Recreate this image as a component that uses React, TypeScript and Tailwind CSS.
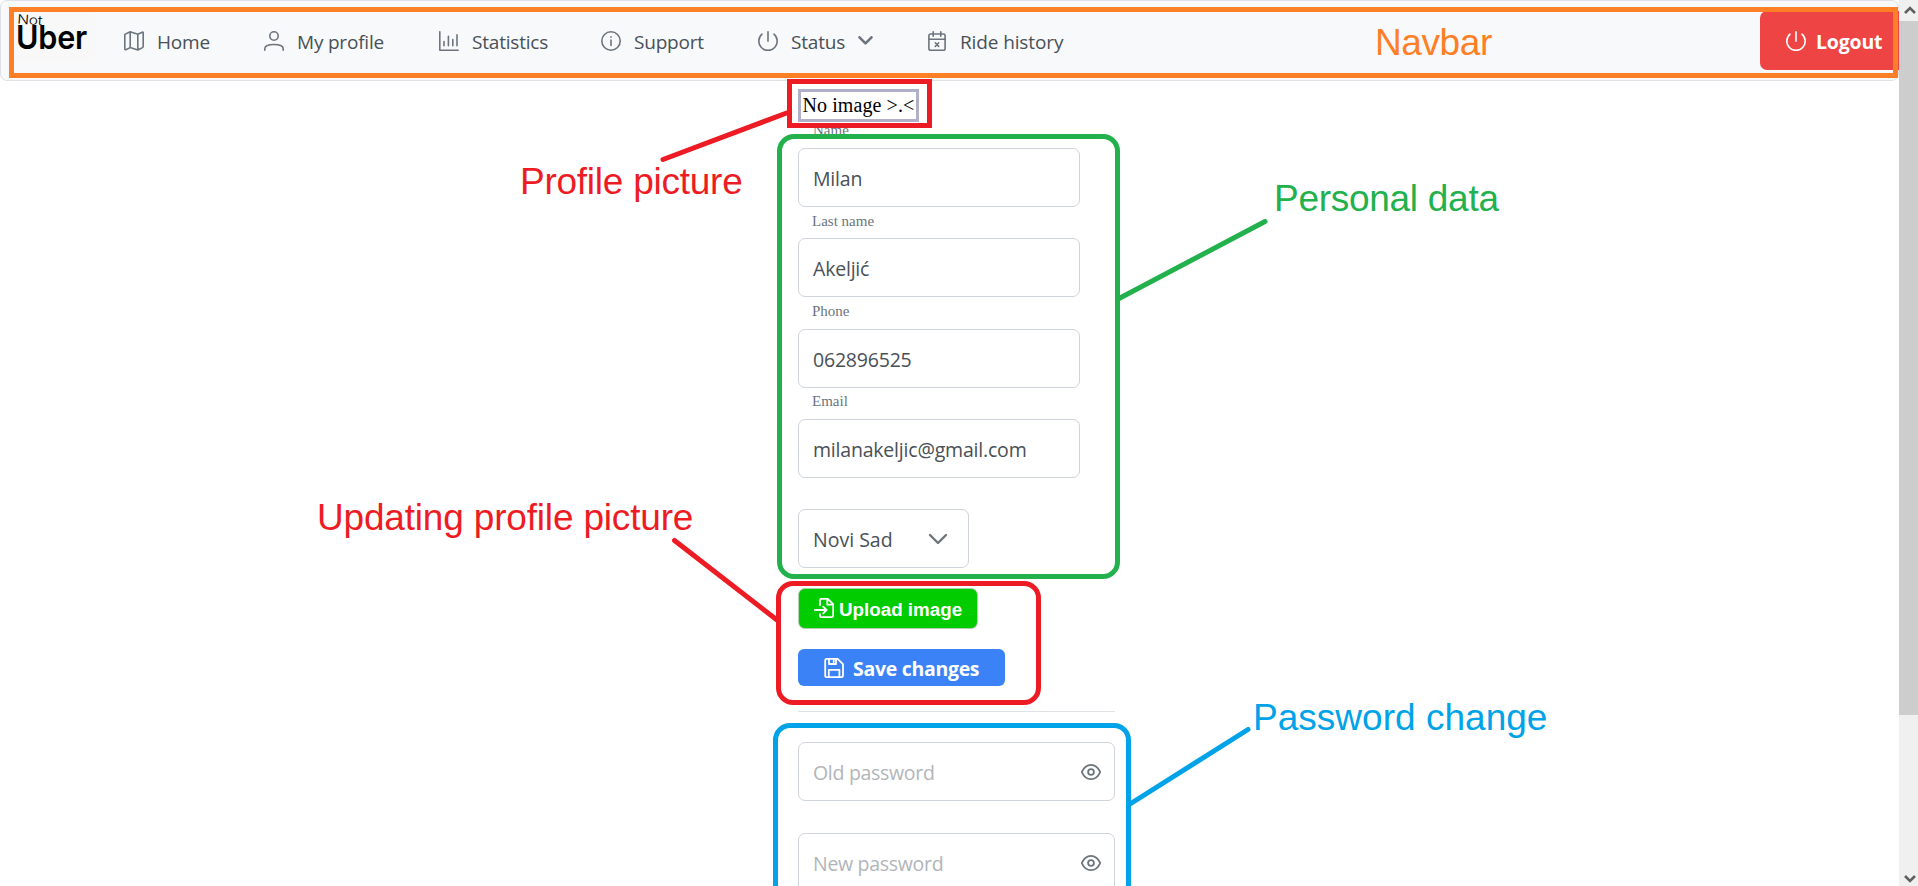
import type { ReactNode } from "react";

const SANS = "font-['Open_Sans','Noto_Sans',sans-serif]";

function Icon({ children, className = "", w = 1.6 }: { children: ReactNode; className?: string; w?: number }) {
  return (
    <svg viewBox="0 0 20 20" width="20" height="20" fill="none" stroke="currentColor" strokeWidth={w} strokeLinecap="round" strokeLinejoin="round" className={`shrink-0 ${className}`}>
      {children}
    </svg>
  );
}

const MapIcon = () => (
  <Icon>
    <path d="M.9 3.4 6.2.8l7.6 2.4 4.4-2q1-.3 1 .7v13.6q0 .8-.7 1.1l-4.7 2.4-7.6-2.4-4.4 2.1q-1 .3-1-.7V3.9ZM6.2.8v15.8M13.8 3.2V19" />
  </Icon>
);
const UserIcon = () => (
  <Icon>
    <circle cx="10" cy="5" r="4.2" />
    <path d="M.8 19.2v-1.4c0-2.6 3.6-4.3 9.2-4.3s9.2 1.7 9.2 4.3v1.4" />
  </Icon>
);
const ChartIcon = () => (
  <Icon>
    <path d="M.8.8v18.4h18.4M5 10.5v4.3M9.4 5.2v9.6M13.8 8.5v6.3M18 3.8v11" />
  </Icon>
);
const InfoIcon = () => (
  <Icon>
    <circle cx="10" cy="10" r="9.2" />
    <path d="M10 9v5.4M10 5.8v.5" />
  </Icon>
);
const PowerIcon = () => (
  <Icon>
    <path d="M10 .8v9.4M16 3.2a9.2 9.2 0 1 1-12 0" />
  </Icon>
);
const CalendarIcon = () => (
  <Icon>
    <rect x="1.9" y="3" width="16.2" height="16.2" rx="1.8" />
    <path d="M1.9 8.3h16.2M6.2.8v4.4M13.8.8v4.4M8.3 11.8l3.4 3.6M11.7 11.8l-3.4 3.6" />
  </Icon>
);
const EyeIcon = () => (
  <Icon w={1.8} className="text-[#6c757d]">
    <path d="M.8 10C2.6 6 6 2.9 10 2.9S17.400 6 19.200 10C17.400 14 14 17.100 10 17.100S2.600 14 .8 10Z" />
    <circle cx="10" cy="10" r="2.900" />
  </Icon>
);
const ImportIcon = () => (
  <Icon w={1.8}>
    <path d="M6 7V2.600Q6 .8 7.800.8h6l5.400 5.400v11.200q0 1.800-1.800 1.800H7.800Q6 19.200 6 17.400v-1.200M13.300 1v5.700h5.700M.8 12h11.600M9.200 8.600l3.400 3.400-3.400 3.400" />
  </Icon>
);
const SaveIcon = () => (
  <Icon w={1.8}>
    <path d="M3 .8h10.600l5.400 5.400v11.200q0 1.800-1.800 1.800H3Q1.200 19.200 1.200 17.400V2.600Q1.200.8 3 .8ZM5 1v5h7V1M4.800 19v-7.200h10.600V19M9.700 2.500v1.600" />
  </Icon>
);

function NavItem({ icon, label, className }: { icon: ReactNode; label: string; className: string }) {
  return (
    <li className={`flex items-center gap-[13px] text-[#6c757d] ${className}`}>
      {icon}
      <span className="pt-[2px] text-[#495057]">{label}</span>
      {label === "Status" && (
        <svg width="15" height="9" viewBox="0 0 15 9" fill="none" stroke="currentColor" strokeWidth="2.6" strokeLinecap="round" strokeLinejoin="round">
          <path d="m1.500 1.300 6 6 6-6" />
        </svg>
      )}
    </li>
  );
}

function Field({ label, value, labelClass }: { label: string; value: string; labelClass: string }) {
  return (
    <div>
      <div className={`text-[15px] font-['Liberation_Serif',serif] tracking-normal text-[#6c757d] ${labelClass}`}>{label}</div>
      <div className="flex h-[59px] w-[282px] items-center rounded-[7px] border border-[#ced4da] pt-[2px] pl-[14px] text-[#495057]">{value}</div>
    </div>
  );
}

function PasswordField({ placeholder, className }: { placeholder: string; className: string }) {
  return (
    <div className={`flex h-[59px] w-[317px] shrink-0 items-center justify-between rounded-[7px] border border-[#ced4da] pr-[13px] pl-[14px] ${className}`}>
      <span className="pt-[3px] tracking-[-0.3px] text-[#b1b5b9]">{placeholder}</span>
      <EyeIcon />
    </div>
  );
}

function Callout({ children, className }: { children: ReactNode; className: string }) {
  return <span className={`absolute text-[37px] leading-[40px] whitespace-nowrap font-['Liberation_Sans',Arial,sans-serif] ${className}`}>{children}</span>;
}

function Annotations() {
  return (
    <div className="pointer-events-none absolute inset-0 overflow-hidden">
      <div className="absolute top-[7px] left-[9px] h-[71px] w-[1889px] border-5 border-[#ff7f27]" />
      <div className="absolute top-[134px] left-[777px] h-[445px] w-[343px] rounded-[17px] border-5 border-[#22b14c]" />
      <div className="absolute top-[79px] left-[787px] h-[49px] w-[145px] border-5 border-[#ed1c24]" />
      <div className="absolute top-[581px] left-[776px] h-[124px] w-[265px] rounded-[17px] border-5 border-[#ed1c24]" />
      <div className="absolute top-[723px] left-[773px] h-[190px] w-[358px] rounded-[17px] border-5 border-[#00a2e8]" />
      <svg width="1918" height="886" className="absolute inset-0" strokeWidth="5" strokeLinecap="round">
        <path d="M663 159.500 788 112.500M674.500 540.500 777 620" stroke="#ed1c24" />
        <path d="M1119 298.500 1265 221.500" stroke="#22b14c" />
        <path d="M1130 804 1248 729.500" stroke="#00a2e8" />
      </svg>
      <Callout className="top-[23px] left-[1375px] tracking-[-0.4px] text-[#ff7f27]">Navbar</Callout>
      <Callout className="top-[162px] left-[520px] tracking-[-0.25px] text-[#ed1c24]">Profile picture</Callout>
      <Callout className="top-[179px] left-[1274px] tracking-[-0.28px] text-[#22b14c]">Personal data</Callout>
      <Callout className="top-[498px] left-[317px] tracking-[-0.18px] text-[#ed1c24]">Updating profile picture</Callout>
      <Callout className="top-[698px] left-[1253px] tracking-[0.02px] text-[#00a2e8]">Password change</Callout>
    </div>
  );
}

export default function App() {
  return (
    <div className={`relative flex h-[886px] w-[1918px] overflow-hidden bg-white text-[19.500px] leading-[20px] tracking-[-0.2px] ${SANS}`}>
      <div className="flex min-w-0 flex-1 flex-col">
        <header className="flex h-[81px] shrink-0 items-start rounded-[7px] border border-[#dee2e6] bg-[#f8f9fb] pt-[10px] pl-[13px] text-[19px]">
          <svg width="81" height="51" viewBox="0 0 81 51" className="mr-[29px] bg-[#f8f8f8]">
            <text x="3" y="12.500" fontSize="13" fontFamily="Inter, sans-serif" fontWeight="300" textLength="25" lengthAdjust="spacingAndGlyphs" transform="rotate(4 3 12)">Not</text>
            <text x="2" y="38" fontSize="33" fontFamily="Inter, sans-serif" fontWeight="600" textLength="71" lengthAdjust="spacingAndGlyphs">Uber</text>
          </svg>
          <ul className="flex h-[59px] items-center">
            <NavItem icon={<MapIcon />} label="Home" className="w-[140px]" />
            <NavItem icon={<UserIcon />} label="My profile" className="w-[175px]" />
            <NavItem icon={<ChartIcon />} label="Statistics" className="w-[162px]" />
            <NavItem icon={<InfoIcon />} label="Support" className="w-[157px]" />
            <NavItem icon={<PowerIcon />} label="Status" className="w-[169px]" />
            <NavItem icon={<CalendarIcon />} label="Ride history" className="w-[150px] tracking-[-0.120px]" />
          </ul>
          <button className="mr-[-1px] ml-auto flex h-[59px] w-[139px] items-center gap-[10px] rounded-l-[7px] bg-[#ef4444] pl-[26px] text-[19.500px] font-bold text-white">
            <PowerIcon />
            <span className="pt-[2px]">Logout</span>
          </button>
        </header>

        <main className="ml-[798px] flex w-[317px] flex-col items-start pt-[8px]">
          <div className="h-[33px] w-[121px] border-3 border-[#b0b0c8] pl-[1.500px] font-['Liberation_Serif',serif] text-[20px] leading-[27px] tracking-[0.080px] whitespace-nowrap text-black">No image &gt;.&lt;</div>
          <Field label="Name" value="Milan" labelClass="h-[26px] pl-[15px] leading-[17px]" />
          <Field label="Last name" value="Akeljić" labelClass="h-[31px] pl-[14px] leading-[29px]" />
          <Field label="Phone" value="062896525" labelClass="h-[32px] pl-[14px] leading-[29px]" />
          <Field label="Email" value="milanakeljic@gmail.com" labelClass="h-[31px] pl-[14px] leading-[27px]" />
          <div className="mt-[31px] flex h-[59px] w-[171px] items-center justify-between rounded-[7px] border border-[#ced4da] pr-[20px] pl-[14px] text-[#495057]">
            <span className="pt-[2px] tracking-normal">Novi Sad</span>
            <svg width="20" height="12" viewBox="0 0 20 12" fill="none" stroke="#6c757d" strokeWidth="2.4" strokeLinecap="round" strokeLinejoin="round">
              <path d="m2 2 8 8 8-8" />
            </svg>
          </div>
          <button className="mt-[20px] flex h-[41px] w-[180px] items-center gap-[5px] rounded-[7px] border border-[#b4cdb4] bg-[#00cc00] pl-[15px] font-['Liberation_Sans',Arial,sans-serif] text-[18.800px] font-bold tracking-normal whitespace-nowrap text-white">
            <span className="-mt-[2px]"><ImportIcon /></span>
            <span className="pt-[2px]">Upload image</span>
          </button>
          <button className="mt-[20px] flex h-[37px] w-[207px] items-center gap-[9px] rounded-[6px] bg-[#3b82f6] pl-[26px] font-bold tracking-[-0.3px] whitespace-nowrap text-white">
            <SaveIcon />
            <span className="pt-[3px]">Save changes</span>
          </button>
          <hr className="mt-[25px] w-full border-[#dee2e6]" />
          <PasswordField placeholder="Old password" className="mt-[30px]" />
          <PasswordField placeholder="New password" className="mt-[32px]" />
        </main>
      </div>

      <aside className="flex w-[19px] flex-col items-center bg-[#f0f0f0]">
        <svg width="19" height="21" fill="none" stroke="#606060" strokeWidth="2.600">
          <path d="m6 13 5-5 5 5" />
        </svg>
        <div className="h-[694px] w-full bg-[#cdcdcd]" />
        <svg width="19" height="22" fill="none" stroke="#606060" strokeWidth="2.600" className="mt-auto">
          <path d="m6 12 5 5 5-5" />
        </svg>
      </aside>
      <Annotations />
    </div>
  );
}
